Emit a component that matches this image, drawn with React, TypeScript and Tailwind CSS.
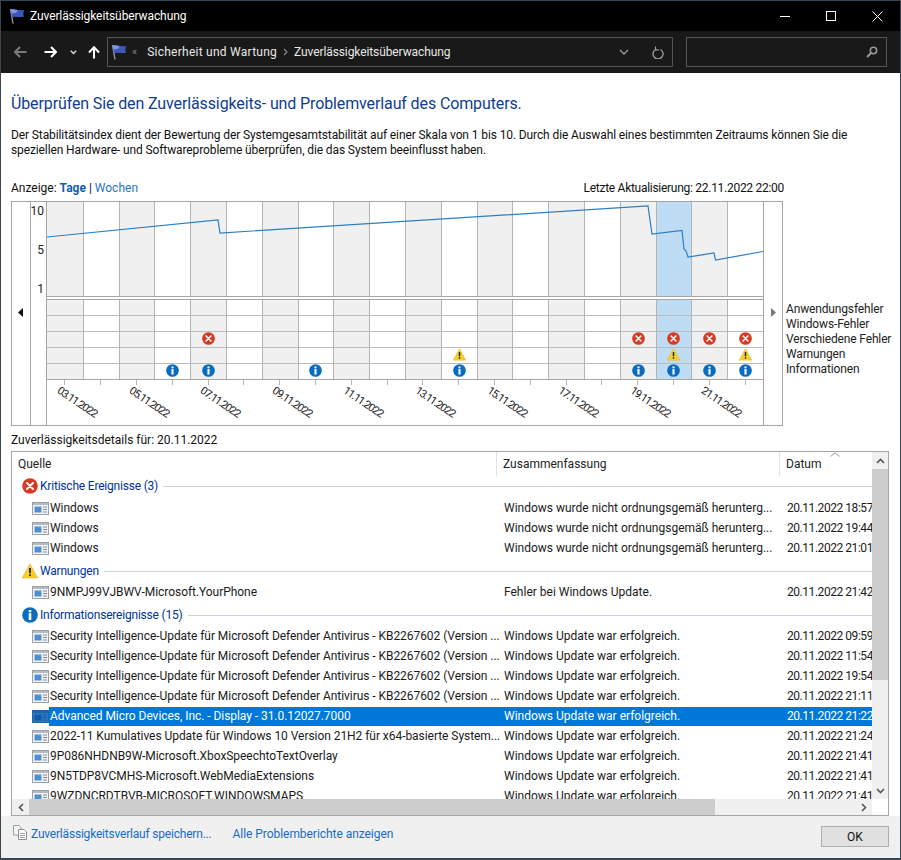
const FONT = "font-['Roboto','Noto_Sans',sans-serif]";

function Flag({ className }: { className?: string }) {
  return (
    <svg className={className} viewBox="0 0 16 16">
      <path d="M1.5 1 L4 15.5" stroke="#8d97a3" strokeWidth="1.4" fill="none" />
      <path d="M1.8 1.5 C5 0 8 3 15.5 2 C14 4.5 14 6 15 8.5 C10 10 7 7.5 3 9.5 Z" fill="#3f57b8" />
      <path d="M1.8 1.5 C4.5 0.6 6.5 2 8.8 2.6 L7.2 4.8 L2.6 5.4 Z" fill="#8296e4" />
    </svg>
  );
}

function ErrorIcon({ size = 16 }: { size?: number }) {
  return (
    <svg width={size} height={size} viewBox="0 0 16 16" className="shrink-0">
      <circle cx="8" cy="8" r="7.8" fill="#d53a22" />
      <path d="M5 5 L11 11 M11 5 L5 11" stroke="#fff" strokeWidth="1.9" strokeLinecap="round" />
    </svg>
  );
}

function WarnIcon({ size = 16 }: { size?: number }) {
  return (
    <svg width={size} height={size} viewBox="0 0 16 16" className="shrink-0">
      <path d="M8 0.8 L15.8 15 H0.2 Z" fill="#f7cf2e" stroke="#e0ad14" strokeWidth="0.5" strokeLinejoin="round" />
      <path d="M8 5 V10.2" stroke="#222" strokeWidth="1.8" />
      <rect x="7.1" y="11.3" width="1.8" height="1.8" fill="#222" />
    </svg>
  );
}

function InfoIcon({ size = 16 }: { size?: number }) {
  return (
    <svg width={size} height={size} viewBox="0 0 16 16" className="shrink-0">
      <circle cx="8" cy="8" r="7.8" fill="#0a6cbf" />
      <rect x="6.7" y="3" width="2.6" height="2.2" fill="#fff" />
      <rect x="6.7" y="6.2" width="2.6" height="6.8" fill="#fff" />
    </svg>
  );
}

function RowIcon({ selected }: { selected?: boolean }) {
  return (
    <svg width="17" height="13" viewBox="0 0 17 13" className="shrink-0">
      <rect x="0.5" y="0.5" width="16" height="12" fill={selected ? "#2f79c4" : "#f2f4f6"} stroke={selected ? "#1f63a8" : "#9aa0a6"} />
      <rect x="1" y="1" width="15" height="2" fill={selected ? "#1f63a8" : "#b4bac0"} />
      <rect x="2.5" y="4.5" width="7" height="6" fill={selected ? "#0f5ba5" : "#4f8fd0"} />
      <path d="M11 5 H15 M11 7.5 H15 M11 10 H15" stroke={selected ? "#0f5ba5" : "#7f8a96"} strokeWidth="1" />
    </svg>
  );
}

const errorCols = [4, 16, 17, 18, 19];
const warnCols = [11, 17, 19];
const infoCols = [3, 4, 7, 11, 16, 17, 18, 19];
const days = Array.from({ length: 20 }, (_, i) => i);

function colBg(i: number) {
  if (i === 17) return "bg-[#bfdcf5]";
  if (i % 2 === 0 && i !== 19) return "bg-[#f0f0f0]";
  return "bg-white";
}

function dateLabel(i: number) {
  const d = 3 + i;
  return `${d < 10 ? "0" + d : d}.11.2022`;
}

function Chart() {
  return (
    <div className="flex h-[225px] w-[772px] border border-[#a6a6a6] bg-white">
      <div className="w-[18px] pt-[106px] pl-[6px]">
        <svg width="5" height="9" viewBox="0 0 5 9"><path d="M5 0 V9 L0 4.5 Z" fill="#111" /></svg>
      </div>
      <div className="flex w-[16px] flex-col items-end gap-[23px] border-l border-[#a6a6a6] pt-px pr-[2px] text-[12px] leading-[16px] text-[#222]">
        <span>10</span>
        <span>5</span>
        <span>1</span>
      </div>
      <div className="flex w-[717px] flex-col border-l border-[#a6a6a6]">
        {/* Index graph */}
        <div className="relative grid h-[95px] shrink-0 grid-cols-20 border-b border-[#a6a6a6]">
          {days.map((i) => (
            <div key={i} className={`${colBg(i)} ${i > 0 ? "border-l border-[#b4b4b4]" : ""}`} />
          ))}
          <svg className="absolute top-0 left-0 h-[94px] w-[716px]" viewBox="0 0 716 94">
            <polyline
              fill="none"
              stroke="#2a7fc4"
              strokeWidth="1.2"
              points="0,35 171,18 173,31 601,4 605,32 635,28.5 637,47 639,49 641,55 667,51 668.5,58 716,49.5"
            />
          </svg>
        </div>
        <div className="h-[3px] shrink-0 border-b border-[#a6a6a6]" />
        {/* Event rows */}
        <div className="grid shrink-0 grid-cols-20 border-b border-[#a6a6a6]">
          {days.map((i) => (
            <div key={i} className={`flex flex-col ${colBg(i)} ${i > 0 ? "border-l border-[#b4b4b4]" : ""}`}>
              {[0, 1, 2, 3, 4].map((r) => (
                <div
                  key={r}
                  className={`flex items-center justify-center pb-[2px] ${r < 4 ? "h-[16px] border-b border-[#bcbcbc]" : "h-[15px]"}`}
                >
                  {r === 2 && errorCols.includes(i) && <ErrorIcon size={13} />}
                  {r === 3 && warnCols.includes(i) && <WarnIcon size={13} />}
                  {r === 4 && infoCols.includes(i) && <InfoIcon size={13} />}
                </div>
              ))}
            </div>
          ))}
        </div>
        {/* Date axis */}
        <div className="grid flex-1 grid-cols-20">
          {days.map((i) => (
            <div key={i} className="relative">
              <div className="mx-auto h-[5px] w-px bg-[#b4b4b4]" />
              {i % 2 === 0 && (
                <span className="absolute top-[4px] left-[15px] origin-top-left rotate-[34deg] text-[11px] leading-[13px] tracking-[-1px] whitespace-nowrap text-[#222]">
                  {dateLabel(i)}
                </span>
              )}
            </div>
          ))}
        </div>
      </div>
      <div className="flex-1 border-l border-[#a6a6a6] pt-[106px] pl-[7px]">
        <svg width="5" height="9" viewBox="0 0 5 9"><path d="M0 0 V9 L5 4.5 Z" fill="#777" /></svg>
      </div>
    </div>
  );
}

type Row = { src: string; sum: string; date: string; selected?: boolean };

const winDown = "Windows wurde nicht ordnungsgemäß herunterg...";
const updateOk = "Windows Update war erfolgreich.";
const defender = "Security Intelligence-Update für Microsoft Defender Antivirus - KB2267602 (Version ...";

const critical: Row[] = [
  { src: "Windows", sum: winDown, date: "20.11.2022 18:57" },
  { src: "Windows", sum: winDown, date: "20.11.2022 19:44" },
  { src: "Windows", sum: winDown, date: "20.11.2022 21:01" },
];
const warnings: Row[] = [
  { src: "9NMPJ99VJBWV-Microsoft.YourPhone", sum: "Fehler bei Windows Update.", date: "20.11.2022 21:42" },
];
const infos: Row[] = [
  { src: defender, sum: updateOk, date: "20.11.2022 09:59" },
  { src: defender, sum: updateOk, date: "20.11.2022 11:54" },
  { src: defender, sum: updateOk, date: "20.11.2022 19:54" },
  { src: defender, sum: updateOk, date: "20.11.2022 21:11" },
  { src: "Advanced Micro Devices, Inc. - Display - 31.0.12027.7000", sum: updateOk, date: "20.11.2022 21:22", selected: true },
  { src: "2022-11 Kumulatives Update für Windows 10 Version 21H2 für x64-basierte System...", sum: updateOk, date: "20.11.2022 21:24" },
  { src: "9P086NHDNB9W-Microsoft.XboxSpeechtoTextOverlay", sum: updateOk, date: "20.11.2022 21:41" },
  { src: "9N5TDP8VCMHS-Microsoft.WebMediaExtensions", sum: updateOk, date: "20.11.2022 21:41" },
  { src: "9WZDNCRDTBVB-MICROSOFT.WINDOWSMAPS", sum: updateOk, date: "20.11.2022 21:41" },
];

function GroupRow({ icon, label, h }: { icon: React.ReactNode; label: string; h: string }) {
  return (
    <div className={`flex ${h} shrink-0 items-center pl-[10px] text-[#003399]`}>
      {icon}
      <span className="ml-[2px] tracking-[-0.2px] whitespace-nowrap">{label}</span>
      <div className="ml-[5px] h-px flex-1 bg-[#ccd3da]" />
    </div>
  );
}

function ListRow({ row }: { row: Row }) {
  return (
    <div className="flex h-[20px] shrink-0 items-center whitespace-nowrap text-[#1a1a1a]">
      <div className="w-[20px] shrink-0" />
      <RowIcon selected={row.selected} />
      <div className={`flex h-[19px] flex-1 items-center pl-px ${row.selected ? "bg-[#0078d7] text-white" : ""}`}>
        <span className="w-[454px] shrink-0 overflow-hidden tracking-[-0.05px]">{row.src}</span>
        <span className="w-[283px] shrink-0 overflow-hidden">{row.sum}</span>
        <span className="flex-1 overflow-hidden tracking-[-0.45px]">{row.date}</span>
      </div>
    </div>
  );
}

function DetailList() {
  return (
    <div className="mr-[11px] ml-[10px] flex h-[365px] shrink-0 flex-col border border-[#a6a6a6] bg-white text-[12px]">
      <div className="flex min-h-0 flex-1">
        <div className="flex min-w-0 flex-1 flex-col overflow-hidden">
          <div className="flex h-[24px] shrink-0 text-[#222]">
            <div className="w-[485px] border-r border-[#dfe3e6] pl-[6px] leading-[25px]">Quelle</div>
            <div className="w-[283px] border-r border-[#dfe3e6] pl-[6px] leading-[25px]">Zusammenfassung</div>
            <div className="relative flex-1 pl-[6px] leading-[25px]">
              Datum
              <svg className="absolute top-0 left-[50px]" width="10" height="5" viewBox="0 0 10 5">
                <path d="M0.5 4.5 L5 0.8 L9.5 4.5" fill="none" stroke="#9a9a9a" />
              </svg>
            </div>
          </div>
          <GroupRow icon={<ErrorIcon />} label="Kritische Ereignisse (3)" h="h-[22px] pb-[2px]" />
          {critical.map((r, i) => <ListRow key={i} row={r} />)}
          <GroupRow icon={<WarnIcon />} label="Warnungen" h="h-[24px] pt-[2px]" />
          {warnings.map((r, i) => <ListRow key={i} row={r} />)}
          <GroupRow icon={<InfoIcon />} label="Informationsereignisse (15)" h="h-[24px] pt-[2px]" />
          {infos.map((r, i) => <ListRow key={i} row={r} />)}
        </div>
        {/* Vertical scrollbar */}
        <div className="flex w-[16px] shrink-0 flex-col bg-[#f0f0f0]">
          <div className="flex h-[17px] items-center justify-center">
            <svg width="9" height="6" viewBox="0 0 9 6"><path d="M1 5 L4.5 1.5 L8 5" fill="none" stroke="#555" strokeWidth="1.6" /></svg>
          </div>
          <div className="h-[211px] bg-[#cdcdcd]" />
          <div className="flex-1" />
          <div className="flex h-[17px] items-center justify-center">
            <svg width="9" height="6" viewBox="0 0 9 6"><path d="M1 1 L4.5 4.5 L8 1" fill="none" stroke="#555" strokeWidth="1.6" /></svg>
          </div>
        </div>
      </div>
      {/* Horizontal scrollbar */}
      <div className="flex h-[16px] shrink-0">
        <div className="flex flex-1 bg-[#f0f0f0]">
          <div className="flex w-[17px] items-center justify-center">
            <svg width="6" height="9" viewBox="0 0 6 9"><path d="M5 1 L1.5 4.5 L5 8" fill="none" stroke="#555" strokeWidth="1.6" /></svg>
          </div>
          <div className="w-[686px] bg-[#cdcdcd]" />
          <div className="flex-1" />
          <div className="flex w-[17px] items-center justify-center">
            <svg width="6" height="9" viewBox="0 0 6 9"><path d="M1 1 L4.5 4.5 L1 8" fill="none" stroke="#555" strokeWidth="1.6" /></svg>
          </div>
        </div>
        <div className="w-[16px] bg-white" />
      </div>
    </div>
  );
}

export default function App() {
  return (
    <div className={`${FONT} flex h-[860px] w-[901px] flex-col overflow-hidden border border-b-2 border-[#3a4650] bg-white text-[12px]`}>
      {/* Title bar */}
      <div className="flex h-[30px] shrink-0 items-center bg-black pl-[8px] text-white">
        <Flag className="h-[16px] w-[16px]" />
        <span className="ml-[5px] tracking-[-0.1px]">Zuverlässigkeitsüberwachung</span>
        <div className="ml-auto flex items-center">
          <div className="flex h-[30px] w-[46px] items-center justify-center">
            <div className="h-px w-[10px] bg-white" />
          </div>
          <div className="flex h-[30px] w-[46px] items-center justify-center">
            <div className="h-[10px] w-[10px] border border-white" />
          </div>
          <div className="flex h-[30px] w-[46px] items-center justify-center">
            <svg width="11" height="11" viewBox="0 0 11 11"><path d="M0.5 0.5 L10.5 10.5 M10.5 0.5 L0.5 10.5" stroke="#fff" /></svg>
          </div>
        </div>
      </div>

      {/* Address bar */}
      <div className="flex h-[42px] shrink-0 items-center bg-[#191919] text-[#e8e8e8]">
        <div className="flex w-[106px] shrink-0 items-center pl-[13px]">
          <svg width="13" height="12" viewBox="0 0 13 12"><path d="M12.5 6 H1.5 M6 1 L1 6 L6 11" fill="none" stroke="#7a7a7a" strokeWidth="2" /></svg>
          <svg className="ml-[17px]" width="13" height="12" viewBox="0 0 13 12"><path d="M0.5 6 H11.5 M7 1 L12 6 L7 11" fill="none" stroke="#fff" strokeWidth="2" /></svg>
          <svg className="ml-[13px]" width="7" height="5" viewBox="0 0 7 5"><path d="M0.8 0.8 L3.5 3.6 L6.2 0.8" fill="none" stroke="#ddd" strokeWidth="1.4" /></svg>
          <svg className="ml-[11px]" width="12" height="13" viewBox="0 0 12 13"><path d="M6 12.5 V1.5 M1 6.5 L6 1.2 L11 6.5" fill="none" stroke="#fff" strokeWidth="2" /></svg>
        </div>
        <div className="flex h-[30px] w-[566px] shrink-0 items-center border border-[#555] pl-[3px]">
          <Flag className="h-[16px] w-[16px]" />
          <span className="ml-[5px] text-[11px] text-[#8a8a8a]">«</span>
          <span className="ml-[10px] tracking-[0.25px]">Sicherheit und Wartung</span>
          <svg className="mx-[6px]" width="5" height="8" viewBox="0 0 5 8"><path d="M1 1 L4 4 L1 7" fill="none" stroke="#888" strokeWidth="1.2" /></svg>
          <span className="tracking-[-0.1px]">Zuverlässigkeitsüberwachung</span>
          <svg className="ml-auto" width="10" height="6" viewBox="0 0 10 6"><path d="M1 1 L5 5 L9 1" fill="none" stroke="#999" strokeWidth="1.4" /></svg>
          <svg className="mr-[8px] ml-[23px]" width="12" height="13" viewBox="0 0 12 13">
            <path d="M3.5 3.5 A5 5 0 1 0 8.5 3.5" fill="none" stroke="#999" strokeWidth="1.4" />
            <path d="M3.5 0.5 V3.8 H6.8" fill="none" stroke="#999" strokeWidth="1.2" />
          </svg>
        </div>
        <div className="ml-[13px] flex h-[30px] w-[201px] shrink-0 items-center justify-end border border-[#555] pr-[8px]">
          <svg width="12" height="12" viewBox="0 0 12 12">
            <circle cx="7.5" cy="4.5" r="3.2" fill="none" stroke="#9a9a9a" strokeWidth="1.5" />
            <path d="M5 7 L1 11" stroke="#9a9a9a" strokeWidth="2" />
          </svg>
        </div>
      </div>

      {/* Content */}
      <div className="flex min-h-0 flex-1 flex-col">
        <h1 className="mt-[19px] ml-[10px] text-[16px] leading-[24px] tracking-[-0.12px] text-[#0f3d91]">
          Überprüfen Sie den Zuverlässigkeits- und Problemverlauf des Computers.
        </h1>
        <p className="mt-[12px] mr-[40px] ml-[10px] leading-[15px] tracking-[-0.11px] text-[#111]">
          Der Stabilitätsindex dient der Bewertung der Systemgesamtstabilität auf einer Skala von 1 bis 10. Durch die Auswahl eines bestimmten Zeitraums können Sie die speziellen Hardware- und Softwareprobleme überprüfen, die das System beeinflusst haben.
        </p>
        <div className="mt-[22px] ml-[10px] flex w-[773px] justify-between leading-[16px] text-[#111]">
          <span>
            Anzeige: <span className="font-bold text-[#0f62b0]">Tage</span> | <span className="text-[#2b74c4]">Wochen</span>
          </span>
          <span className="tracking-[-0.28px]">Letzte Aktualisierung: 22.11.2022 22:00</span>
        </div>
        <div className="mt-[5px] ml-[10px] flex">
          <Chart />
          <div className="pt-[101px] pl-[3px] leading-[15px] tracking-[-0.15px] whitespace-nowrap text-[#222]">
            <div>Anwendungsfehler</div>
            <div>Windows-Fehler</div>
            <div>Verschiedene Fehler</div>
            <div>Warnungen</div>
            <div>Informationen</div>
          </div>
        </div>
        <div className="mt-[6px] mb-[3px] ml-[10px] leading-[16px] text-[#111]">Zuverlässigkeitsdetails für: 20.11.2022</div>
        <DetailList />
      </div>

      {/* Footer */}
      <div className="flex h-[42px] shrink-0 items-start bg-[#f0f0f0] text-[#1a6cc0]">
        <svg className="mt-[9px] ml-[12px]" width="14" height="15" viewBox="0 0 14 15">
          <path d="M0.5 0.5 H6 L8 2.5 V10 H0.5 Z" fill="#f5f5f5" stroke="#9aa0a6" />
          <path d="M5.5 4.5 H11 L13.5 7 V14.5 H5.5 Z" fill="#fff" stroke="#8a9096" />
          <path d="M7 8.5 H12 M7 10.5 H12 M7 12.5 H12" stroke="#9aa0a6" />
        </svg>
        <span className="mt-[10px] ml-[4px] leading-[16px] tracking-[-0.2px]">Zuverlässigkeitsverlauf speichern...</span>
        <span className="mt-[10px] ml-[21px] leading-[16px] tracking-[-0.05px]">Alle Problemberichte anzeigen</span>
        <div className="mt-[10px] mr-[11px] ml-auto flex h-[21px] w-[68px] items-center justify-center border border-[#adadad] bg-[#e1e1e1] text-[#111]">
          OK
        </div>
      </div>
    </div>
  );
}
